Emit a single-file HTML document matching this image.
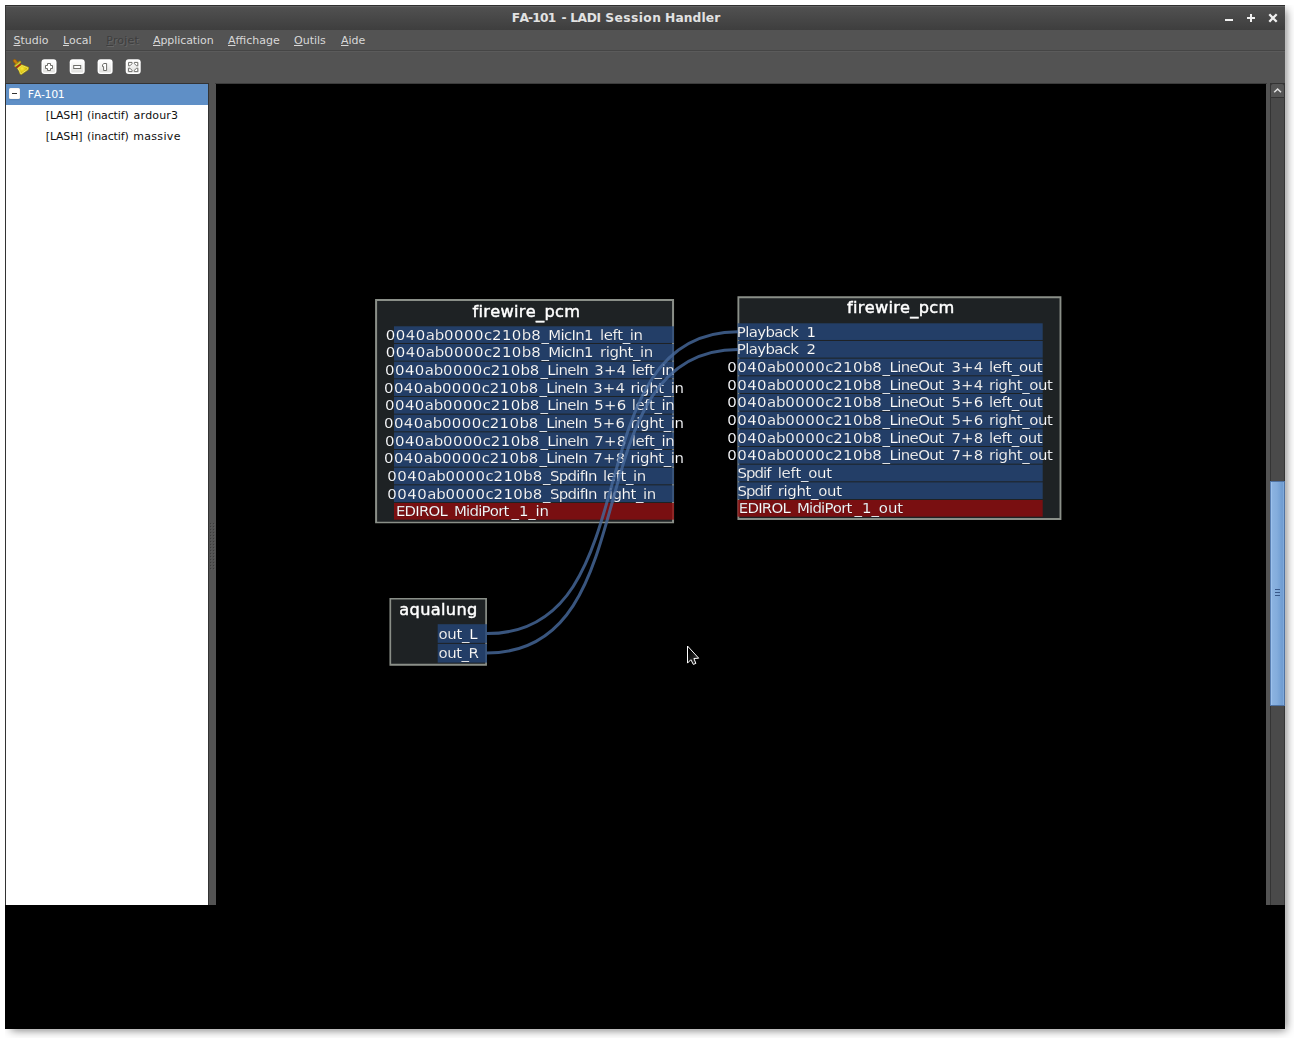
<!DOCTYPE html><html><head><meta charset="utf-8"><title>FA-101 - LADI Session Handler</title><style>
html,body{margin:0;padding:0;}
body{width:1294px;height:1038px;background:#fff;position:relative;overflow:hidden;font-family:"DejaVu Sans","Liberation Sans",sans-serif;font-size:11px;color:#dcdcdc;}
div{position:absolute;box-sizing:border-box;}
#shclip{left:5px;top:5px;width:1289px;height:1033px;overflow:hidden;}
#shadow{left:6px;top:5px;width:1275px;height:1020px;background:rgba(0,0,0,0.55);filter:blur(5px);}
#edgeR{left:1285px;top:6px;width:1px;height:1024px;background:rgba(255,255,255,0.12);}
#edgeB{left:6px;top:1029px;width:1279px;height:1px;background:rgba(255,255,255,0.12);}
#win{left:5px;top:5px;width:1280px;height:1024px;background:#535353;}
#title{left:5px;top:5px;width:1280px;height:25px;background:linear-gradient(#515151,#3e3e3e);border-top:1px solid #2f2f2f;border-left:1px solid #383838;}
#title:before{content:"";position:absolute;left:0;top:0;width:100%;height:1px;background:#626262;}
#ttext{left:-0.5px;top:6px;width:1233px;height:25px;line-height:25px;text-align:center;font-weight:bold;font-size:12.28px;color:#e2e2e2;}
#menubar{left:5px;top:30px;width:1280px;height:21px;background:#535353;border-left:1px solid #3a3a3a;}
.mi{top:31px;height:20px;line-height:20px;font-size:11px;color:#d8d8d8;white-space:nowrap;}
.mi u{text-decoration:underline;text-underline-offset:1px;}
#sep1{left:6px;top:50px;width:1279px;height:1px;background:#454545;}
#sep2{left:6px;top:51px;width:1279px;height:1px;background:#5b5b5b;}
#lborder{left:5px;top:30px;width:1px;height:876px;background:#3a3a3a;}
#tree{left:5px;top:83px;width:204px;height:823px;background:#fff;border:1px solid #333;}
#sel{left:6px;top:84px;width:202px;height:21px;background:#5f8fc6;}
.tr{font-size:11px;color:#101010;height:21px;line-height:21px;white-space:nowrap;}
#canvas{left:216px;top:84px;width:1050px;height:821px;background:#000;}
#cshadow{left:215px;top:83px;width:1052px;height:1px;background:#3c3c3c;}
#bottom{left:5px;top:905px;width:1280px;height:124px;background:#000;}
#sb{left:1270px;top:83px;width:15px;height:822px;background:#4a4a4a;border-left:1px solid #343434;border-right:1px solid #343434;border-top:1px solid #343434;}
#sbup{left:1270px;top:83px;width:15px;height:15px;background:#555;border:1px solid #343434;border-radius:3px 3px 0 0;}
#slider{left:1270px;top:481px;width:15px;height:225px;border:1px solid #4f73a3;border-left-color:#5a80b2;background:linear-gradient(90deg,#9cc1ec 0,#9cc1ec 1px,#8ab2e0 1.5px,#84addc 45%,#6f9cd1 88%,#80aadb 92%,#80aadb);}
</style></head><body>
<div id="shclip"><div id="shadow"></div></div><div id="edgeR"></div><div id="edgeB"></div><div id="win"></div>
<div id="title"></div>
<svg style="position:absolute;left:480px;top:6px" width="300" height="24" viewBox="480 6 300 24"><text y="22" font-size="12.25" font-weight="bold" fill="#e2e2e2" style="font-kerning:none;font-family:DejaVu Sans,Liberation Sans,sans-serif"><tspan x="511.83" letter-spacing="-0.807">FA-101 </tspan><tspan x="561.49" letter-spacing="0.000">- </tspan><tspan x="570.13" letter-spacing="-0.319">LADI </tspan><tspan x="605.27" letter-spacing="0.431">Session </tspan><tspan x="665.03" letter-spacing="0.109">Handler</tspan></text></svg>
<svg style="position:absolute;left:1215px;top:8px" width="70" height="20" viewBox="1215 8 70 20"><g stroke="#f0f0f0" stroke-width="2" fill="none"><path d="M1225 20h8"/><path d="M1247 18h8M1251 14v8"/><path d="M1269.3 14.3l7.4 7.4M1276.7 14.3l-7.4 7.4" stroke-width="2.3"/></g></svg>
<div id="menubar"></div>
<div class="mi" style="left:13.5px;"><u>S</u>tudio</div>
<div class="mi" style="left:63px;"><u>L</u>ocal</div>
<div class="mi" style="left:106.3px;color:#3e3e3e;text-shadow:1px 1px 0 #666;letter-spacing:0.17px;"><u>P</u>rojet</div>
<div class="mi" style="left:153px;letter-spacing:-0.08px;"><u>A</u>pplication</div>
<div class="mi" style="left:228px;"><u>A</u>ffichage</div>
<div class="mi" style="left:294px;"><u>O</u>utils</div>
<div class="mi" style="left:341px;"><u>A</u>ide</div>
<div id="sep1"></div><div id="sep2"></div>
<div id="lborder"></div>

<svg style="position:absolute;left:10px;top:56px" width="140" height="22" viewBox="10 56 140 22">
<defs>
<linearGradient id="wg" x1="0" y1="0" x2="0" y2="1"><stop offset="0" stop-color="#ffffff"/><stop offset="0.45" stop-color="#f2f2f1"/><stop offset="1" stop-color="#dfdfdd"/></linearGradient>
<radialGradient id="yg" cx="22" cy="68.5" r="5.5" gradientUnits="userSpaceOnUse"><stop offset="0" stop-color="#fbe838"/><stop offset="1" stop-color="#cbb200"/></radialGradient>
</defs>
<g>
<path d="M14.6 60.8 L17 63.5" stroke="#94600a" stroke-width="3.6" stroke-linecap="round"/>
<path d="M14.6 60.8 L17 63.5" stroke="#c87e10" stroke-width="2.1" stroke-linecap="round"/>
<path d="M15.4 65.9 L20 62" stroke="#a89a10" stroke-width="2.4" stroke-linecap="round"/>
<path d="M15.7 66 L19.8 62.6" stroke="#d2cc48" stroke-width="1.1" stroke-linecap="round"/>
<path d="M16.7 68.3 L21.5 64.3 C24 65.3 27 66.4 29.1 67.3 L28.5 69.9 L21.2 75.1 L19.7 74.3 C19.3 72 18.3 70 16.7 68.3 Z" fill="#b49e00"/>
<path d="M17.9 68.5 L21.7 65.4 C24 66.3 26.3 67.2 27.9 67.9 L27.5 69.4 L21.1 73.9 L20.6 73.6 C20.1 71.7 19.2 70 17.9 68.5 Z" fill="url(#yg)" stroke="#f4ec78" stroke-width="0.8" stroke-linejoin="round"/>
<path d="M16.2 67.6 L20.9 64" stroke="#c0200e" stroke-width="1.25"/>
</g>
<rect x="41.5" y="59.2" width="15" height="14.8" rx="3" fill="#fff"/><rect x="43" y="60.7" width="12" height="11.8" rx="1.2" fill="url(#wg)"/>
<rect x="69.7" y="59.2" width="15" height="14.8" rx="3" fill="#fff"/><rect x="71.2" y="60.7" width="12" height="11.8" rx="1.2" fill="url(#wg)"/>
<rect x="97.6" y="59.2" width="15" height="14.8" rx="3" fill="#fff"/><rect x="99.1" y="60.7" width="12" height="11.8" rx="1.2" fill="url(#wg)"/>
<rect x="125.7" y="59.2" width="15" height="14.8" rx="3" fill="#fff"/><rect x="127.2" y="60.7" width="12" height="11.8" rx="1.2" fill="url(#wg)"/>

<g fill="#fff" stroke="#6e6e6a" stroke-width="1" stroke-linejoin="miter">
<path d="M47.5 63.5H50.5V65.5H52.5V68.5H50.5V70.5H47.5V68.5H45.5V65.5H47.5Z"/>
<rect x="73.7" y="65.5" width="7" height="3"/>
<path d="M104 63.5H106.6V70.5H103.6V66.6H102.5V64.7Z"/>
<path d="M128.6 62.4H132V63.7L129.9 65.8H128.6Z"/><path d="M137.800 62.4H134.400V63.7L136.500 65.8H137.800Z"/>
<path d="M128.6 71.6H132V70.3L129.9 68.2H128.6Z"/><path d="M137.800 71.6H134.400V70.3L136.500 68.2H137.800Z"/>
</g>
</svg>

<div id="tree"></div><div id="sel"></div>
<svg style="position:absolute;left:8px;top:87px" width="14" height="14" viewBox="8 87 14 14"><rect x="9.3" y="99" width="10.4" height="1.2" fill="#4a78ad" opacity="0.5"/><rect x="9" y="88" width="11" height="11" rx="1.6" fill="#f3ece4"/><rect x="9.6" y="88.6" width="9.8" height="9.8" rx="1" fill="#fff"/><rect x="12" y="93" width="5" height="1" fill="#333"/></svg>
<svg style="position:absolute;left:24px;top:84px" width="184" height="63" viewBox="24 84 184 63"><text y="98" font-size="11" fill="#fff" style="font-kerning:none;font-family:DejaVu Sans,Liberation Sans,sans-serif"><tspan x="27.87" letter-spacing="-0.384">FA-101</tspan></text><text y="119" font-size="11" fill="#101010" style="font-kerning:none;font-family:DejaVu Sans,Liberation Sans,sans-serif"><tspan x="45.80" letter-spacing="-0.140">[LASH] </tspan><tspan x="87.10" letter-spacing="-0.119">(inactif) </tspan><tspan x="133.54" letter-spacing="0.171">ardour3</tspan></text><text y="140" font-size="11" fill="#101010" style="font-kerning:none;font-family:DejaVu Sans,Liberation Sans,sans-serif"><tspan x="45.80" letter-spacing="-0.140">[LASH] </tspan><tspan x="87.10" letter-spacing="-0.119">(inactif) </tspan><tspan x="133.20" letter-spacing="0.331">massive</tspan></text></svg>
<svg style="position:absolute;left:209px;top:522px" width="7" height="49" viewBox="209 522 7 49" shape-rendering="crispEdges"><rect x="210" y="523" width="1" height="1" fill="#3b3b3b"/><rect x="211" y="524" width="1" height="1" fill="#5b5b5b"/><rect x="213" y="523" width="1" height="1" fill="#3b3b3b"/><rect x="214" y="524" width="1" height="1" fill="#5b5b5b"/><rect x="210" y="526" width="1" height="1" fill="#3b3b3b"/><rect x="211" y="527" width="1" height="1" fill="#5b5b5b"/><rect x="213" y="526" width="1" height="1" fill="#3b3b3b"/><rect x="214" y="527" width="1" height="1" fill="#5b5b5b"/><rect x="210" y="529" width="1" height="1" fill="#3b3b3b"/><rect x="211" y="530" width="1" height="1" fill="#5b5b5b"/><rect x="213" y="529" width="1" height="1" fill="#3b3b3b"/><rect x="214" y="530" width="1" height="1" fill="#5b5b5b"/><rect x="210" y="532" width="1" height="1" fill="#3b3b3b"/><rect x="211" y="533" width="1" height="1" fill="#5b5b5b"/><rect x="213" y="532" width="1" height="1" fill="#3b3b3b"/><rect x="214" y="533" width="1" height="1" fill="#5b5b5b"/><rect x="210" y="535" width="1" height="1" fill="#3b3b3b"/><rect x="211" y="536" width="1" height="1" fill="#5b5b5b"/><rect x="213" y="535" width="1" height="1" fill="#3b3b3b"/><rect x="214" y="536" width="1" height="1" fill="#5b5b5b"/><rect x="210" y="538" width="1" height="1" fill="#3b3b3b"/><rect x="211" y="539" width="1" height="1" fill="#5b5b5b"/><rect x="213" y="538" width="1" height="1" fill="#3b3b3b"/><rect x="214" y="539" width="1" height="1" fill="#5b5b5b"/><rect x="210" y="541" width="1" height="1" fill="#3b3b3b"/><rect x="211" y="542" width="1" height="1" fill="#5b5b5b"/><rect x="213" y="541" width="1" height="1" fill="#3b3b3b"/><rect x="214" y="542" width="1" height="1" fill="#5b5b5b"/><rect x="210" y="544" width="1" height="1" fill="#3b3b3b"/><rect x="211" y="545" width="1" height="1" fill="#5b5b5b"/><rect x="213" y="544" width="1" height="1" fill="#3b3b3b"/><rect x="214" y="545" width="1" height="1" fill="#5b5b5b"/><rect x="210" y="547" width="1" height="1" fill="#3b3b3b"/><rect x="211" y="548" width="1" height="1" fill="#5b5b5b"/><rect x="213" y="547" width="1" height="1" fill="#3b3b3b"/><rect x="214" y="548" width="1" height="1" fill="#5b5b5b"/><rect x="210" y="550" width="1" height="1" fill="#3b3b3b"/><rect x="211" y="551" width="1" height="1" fill="#5b5b5b"/><rect x="213" y="550" width="1" height="1" fill="#3b3b3b"/><rect x="214" y="551" width="1" height="1" fill="#5b5b5b"/><rect x="210" y="553" width="1" height="1" fill="#3b3b3b"/><rect x="211" y="554" width="1" height="1" fill="#5b5b5b"/><rect x="213" y="553" width="1" height="1" fill="#3b3b3b"/><rect x="214" y="554" width="1" height="1" fill="#5b5b5b"/><rect x="210" y="556" width="1" height="1" fill="#3b3b3b"/><rect x="211" y="557" width="1" height="1" fill="#5b5b5b"/><rect x="213" y="556" width="1" height="1" fill="#3b3b3b"/><rect x="214" y="557" width="1" height="1" fill="#5b5b5b"/><rect x="210" y="559" width="1" height="1" fill="#3b3b3b"/><rect x="211" y="560" width="1" height="1" fill="#5b5b5b"/><rect x="213" y="559" width="1" height="1" fill="#3b3b3b"/><rect x="214" y="560" width="1" height="1" fill="#5b5b5b"/><rect x="210" y="562" width="1" height="1" fill="#3b3b3b"/><rect x="211" y="563" width="1" height="1" fill="#5b5b5b"/><rect x="213" y="562" width="1" height="1" fill="#3b3b3b"/><rect x="214" y="563" width="1" height="1" fill="#5b5b5b"/><rect x="210" y="565" width="1" height="1" fill="#3b3b3b"/><rect x="211" y="566" width="1" height="1" fill="#5b5b5b"/><rect x="213" y="565" width="1" height="1" fill="#3b3b3b"/><rect x="214" y="566" width="1" height="1" fill="#5b5b5b"/><rect x="210" y="568" width="1" height="1" fill="#3b3b3b"/><rect x="211" y="569" width="1" height="1" fill="#5b5b5b"/><rect x="213" y="568" width="1" height="1" fill="#3b3b3b"/><rect x="214" y="569" width="1" height="1" fill="#5b5b5b"/></svg>
<div id="cshadow"></div>
<div id="canvas"></div>
<div id="bottom"></div>
<div id="sb"></div><div id="sbup"></div><div id="slider"></div>
<svg style="position:absolute;left:1270px;top:83px" width="15" height="15" viewBox="0 0 15 15"><path d="M4.2 9.3 L7.6 6 L11 9.3" fill="none" stroke="#e4e4e4" stroke-width="1.5"/></svg>
<svg style="position:absolute;left:1273px;top:588px" width="9" height="9" viewBox="0 0 9 9"><path d="M2 1.5h5M2 4.5h5M2 7.500h5" stroke="#39598a" stroke-width="1"/></svg>
<svg style="position:absolute;left:216px;top:84px;opacity:0.999" width="1050" height="821" viewBox="216 84 1050 821" font-family='DejaVu Sans,Liberation Sans,sans-serif'>
<rect x="375.6" y="299.6" width="297.95" height="223.05" fill="#1e2224"/>
<path d="M375.1 299.1H674.05V523.15H375.1ZM377.1 301.1V521.7H672.05V301.1Z" fill="#8a8f88" fill-rule="evenodd"/>
<rect x="394" y="326.3" width="280" height="16.67" fill="#244678" fill-opacity="0.8"/>
<rect x="394" y="343.97" width="280" height="16.67" fill="#244678" fill-opacity="0.8"/>
<rect x="394" y="361.64" width="280" height="16.67" fill="#244678" fill-opacity="0.8"/>
<rect x="394" y="379.31" width="280" height="16.67" fill="#244678" fill-opacity="0.8"/>
<rect x="394" y="396.98" width="280" height="16.67" fill="#244678" fill-opacity="0.8"/>
<rect x="394" y="414.65" width="280" height="16.67" fill="#244678" fill-opacity="0.8"/>
<rect x="394" y="432.32" width="280" height="16.67" fill="#244678" fill-opacity="0.8"/>
<rect x="394" y="449.99" width="280" height="16.67" fill="#244678" fill-opacity="0.8"/>
<rect x="394" y="467.66" width="280" height="16.67" fill="#244678" fill-opacity="0.8"/>
<rect x="394" y="485.33" width="280" height="16.67" fill="#244678" fill-opacity="0.8"/>
<rect x="394" y="503" width="280" height="16.67" fill="#900b0d" fill-opacity="0.8"/>
<text y="317.00" font-size="16.2" fill="#fff" style="font-kerning:none" stroke="#fff" stroke-width="0.45"><tspan x="472.50" letter-spacing="0.302">firewire<tspan dy="1">_</tspan><tspan dy="-1">pcm</tspan></tspan></text>
<text y="340.00" font-size="14.93" fill="#fff" style="font-kerning:none" stroke="#0a1626" stroke-opacity="0.5" stroke-width="0.25"><tspan x="385.87" letter-spacing="0.482">0040</tspan><tspan letter-spacing="-0.200">ab</tspan><tspan letter-spacing="0.482">0000</tspan><tspan letter-spacing="-0.200">c</tspan><tspan letter-spacing="0.482">210</tspan><tspan letter-spacing="-0.200">b</tspan><tspan letter-spacing="0.482">8</tspan><tspan x="541.50" letter-spacing="-0.673"><tspan dy="1">_</tspan><tspan dy="-1">MicIn1 </tspan></tspan><tspan x="599.94" letter-spacing="-0.424">left<tspan dy="1">_</tspan><tspan dy="-1">in</tspan></tspan></text>
<text y="357.00" font-size="14.93" fill="#fff" style="font-kerning:none" stroke="#0a1626" stroke-opacity="0.5" stroke-width="0.25"><tspan x="385.87" letter-spacing="0.482">0040</tspan><tspan letter-spacing="-0.200">ab</tspan><tspan letter-spacing="0.482">0000</tspan><tspan letter-spacing="-0.200">c</tspan><tspan letter-spacing="0.482">210</tspan><tspan letter-spacing="-0.200">b</tspan><tspan letter-spacing="0.482">8</tspan><tspan x="541.50" letter-spacing="-0.673"><tspan dy="1">_</tspan><tspan dy="-1">MicIn1 </tspan></tspan><tspan x="599.99" letter-spacing="-0.404">right<tspan dy="1">_</tspan><tspan dy="-1">in</tspan></tspan></text>
<text y="375.00" font-size="14.93" fill="#fff" style="font-kerning:none" stroke="#0a1626" stroke-opacity="0.5" stroke-width="0.25"><tspan x="385.07" letter-spacing="0.437">0040</tspan><tspan letter-spacing="-0.200">ab</tspan><tspan letter-spacing="0.437">0000</tspan><tspan letter-spacing="-0.200">c</tspan><tspan letter-spacing="0.437">210</tspan><tspan letter-spacing="-0.200">b</tspan><tspan letter-spacing="0.437">8</tspan><tspan x="540.60" letter-spacing="-0.704"><tspan dy="1">_</tspan><tspan dy="-1">LineIn </tspan></tspan><tspan x="594.31" letter-spacing="0.134">3+4 </tspan><tspan x="631.74" letter-spacing="-0.424">left<tspan dy="1">_</tspan><tspan dy="-1">in</tspan></tspan></text>
<text y="393.00" font-size="14.93" fill="#fff" style="font-kerning:none" stroke="#0a1626" stroke-opacity="0.5" stroke-width="0.25"><tspan x="383.97" letter-spacing="0.437">0040</tspan><tspan letter-spacing="-0.200">ab</tspan><tspan letter-spacing="0.437">0000</tspan><tspan letter-spacing="-0.200">c</tspan><tspan letter-spacing="0.437">210</tspan><tspan letter-spacing="-0.200">b</tspan><tspan letter-spacing="0.437">8</tspan><tspan x="539.50" letter-spacing="-0.704"><tspan dy="1">_</tspan><tspan dy="-1">LineIn </tspan></tspan><tspan x="593.21" letter-spacing="0.134">3+4 </tspan><tspan x="630.59" letter-spacing="-0.390">right<tspan dy="1">_</tspan><tspan dy="-1">in</tspan></tspan></text>
<text y="410.00" font-size="14.93" fill="#fff" style="font-kerning:none" stroke="#0a1626" stroke-opacity="0.5" stroke-width="0.25"><tspan x="385.07" letter-spacing="0.437">0040</tspan><tspan letter-spacing="-0.200">ab</tspan><tspan letter-spacing="0.437">0000</tspan><tspan letter-spacing="-0.200">c</tspan><tspan letter-spacing="0.437">210</tspan><tspan letter-spacing="-0.200">b</tspan><tspan letter-spacing="0.437">8</tspan><tspan x="540.60" letter-spacing="-0.704"><tspan dy="1">_</tspan><tspan dy="-1">LineIn </tspan></tspan><tspan x="594.30" letter-spacing="0.192">5+6 </tspan><tspan x="631.74" letter-spacing="-0.424">left<tspan dy="1">_</tspan><tspan dy="-1">in</tspan></tspan></text>
<text y="428.00" font-size="14.93" fill="#fff" style="font-kerning:none" stroke="#0a1626" stroke-opacity="0.5" stroke-width="0.25"><tspan x="383.97" letter-spacing="0.437">0040</tspan><tspan letter-spacing="-0.200">ab</tspan><tspan letter-spacing="0.437">0000</tspan><tspan letter-spacing="-0.200">c</tspan><tspan letter-spacing="0.437">210</tspan><tspan letter-spacing="-0.200">b</tspan><tspan letter-spacing="0.437">8</tspan><tspan x="539.50" letter-spacing="-0.704"><tspan dy="1">_</tspan><tspan dy="-1">LineIn </tspan></tspan><tspan x="593.20" letter-spacing="0.192">5+6 </tspan><tspan x="630.59" letter-spacing="-0.390">right<tspan dy="1">_</tspan><tspan dy="-1">in</tspan></tspan></text>
<text y="446.00" font-size="14.93" fill="#fff" style="font-kerning:none" stroke="#0a1626" stroke-opacity="0.5" stroke-width="0.25"><tspan x="385.07" letter-spacing="0.437">0040</tspan><tspan letter-spacing="-0.200">ab</tspan><tspan letter-spacing="0.437">0000</tspan><tspan letter-spacing="-0.200">c</tspan><tspan letter-spacing="0.437">210</tspan><tspan letter-spacing="-0.200">b</tspan><tspan letter-spacing="0.437">8</tspan><tspan x="540.60" letter-spacing="-0.704"><tspan dy="1">_</tspan><tspan dy="-1">LineIn </tspan></tspan><tspan x="594.23" letter-spacing="0.269">7+8 </tspan><tspan x="631.74" letter-spacing="-0.424">left<tspan dy="1">_</tspan><tspan dy="-1">in</tspan></tspan></text>
<text y="463.00" font-size="14.93" fill="#fff" style="font-kerning:none" stroke="#0a1626" stroke-opacity="0.5" stroke-width="0.25"><tspan x="383.97" letter-spacing="0.437">0040</tspan><tspan letter-spacing="-0.200">ab</tspan><tspan letter-spacing="0.437">0000</tspan><tspan letter-spacing="-0.200">c</tspan><tspan letter-spacing="0.437">210</tspan><tspan letter-spacing="-0.200">b</tspan><tspan letter-spacing="0.437">8</tspan><tspan x="539.50" letter-spacing="-0.704"><tspan dy="1">_</tspan><tspan dy="-1">LineIn </tspan></tspan><tspan x="593.13" letter-spacing="0.269">7+8 </tspan><tspan x="630.59" letter-spacing="-0.390">right<tspan dy="1">_</tspan><tspan dy="-1">in</tspan></tspan></text>
<text y="481.00" font-size="14.93" fill="#fff" style="font-kerning:none" stroke="#0a1626" stroke-opacity="0.5" stroke-width="0.25"><tspan x="387.37" letter-spacing="0.482">0040</tspan><tspan letter-spacing="-0.200">ab</tspan><tspan letter-spacing="0.482">0000</tspan><tspan letter-spacing="-0.200">c</tspan><tspan letter-spacing="0.482">210</tspan><tspan letter-spacing="-0.200">b</tspan><tspan letter-spacing="0.482">8</tspan><tspan x="543.10" letter-spacing="-0.678"><tspan dy="1">_</tspan><tspan dy="-1">SpdifIn </tspan></tspan><tspan x="602.94" letter-spacing="-0.357">left<tspan dy="1">_</tspan><tspan dy="-1">in</tspan></tspan></text>
<text y="499.00" font-size="14.93" fill="#fff" style="font-kerning:none" stroke="#0a1626" stroke-opacity="0.5" stroke-width="0.25"><tspan x="387.37" letter-spacing="0.482">0040</tspan><tspan letter-spacing="-0.200">ab</tspan><tspan letter-spacing="0.482">0000</tspan><tspan letter-spacing="-0.200">c</tspan><tspan letter-spacing="0.482">210</tspan><tspan letter-spacing="-0.200">b</tspan><tspan letter-spacing="0.482">8</tspan><tspan x="543.10" letter-spacing="-0.678"><tspan dy="1">_</tspan><tspan dy="-1">SpdifIn </tspan></tspan><tspan x="602.99" letter-spacing="-0.419">right<tspan dy="1">_</tspan><tspan dy="-1">in</tspan></tspan></text>
<text y="516.00" font-size="14.93" fill="#fff" style="font-kerning:none" stroke="#0a1626" stroke-opacity="0.5" stroke-width="0.25"><tspan x="395.88" letter-spacing="-0.746">EDIROL </tspan><tspan x="453.98" letter-spacing="-0.752">MidiPort</tspan><tspan x="511.60" letter-spacing="-0.154"><tspan dy="1">_</tspan><tspan dy="-1">1</tspan><tspan dy="1">_</tspan><tspan dy="-1">in</tspan></tspan></text>
<rect x="737.95" y="296.8" width="322.95" height="222.6" fill="#1e2224"/>
<path d="M737.45 296.3H1061.4V519.9H737.45ZM739.3 298.15V518.05H1059.55V298.15Z" fill="#8a8f88" fill-rule="evenodd"/>
<rect x="737.5" y="323.3" width="305.2" height="16.67" fill="#244678" fill-opacity="0.8"/>
<rect x="737.5" y="340.97" width="305.2" height="16.67" fill="#244678" fill-opacity="0.8"/>
<rect x="737.5" y="358.64" width="305.2" height="16.67" fill="#244678" fill-opacity="0.8"/>
<rect x="737.5" y="376.31" width="305.2" height="16.67" fill="#244678" fill-opacity="0.8"/>
<rect x="737.5" y="393.98" width="305.2" height="16.67" fill="#244678" fill-opacity="0.8"/>
<rect x="737.5" y="411.65" width="305.2" height="16.67" fill="#244678" fill-opacity="0.8"/>
<rect x="737.5" y="429.32" width="305.2" height="16.67" fill="#244678" fill-opacity="0.8"/>
<rect x="737.5" y="446.99" width="305.2" height="16.67" fill="#244678" fill-opacity="0.8"/>
<rect x="737.5" y="464.66" width="305.2" height="16.67" fill="#244678" fill-opacity="0.8"/>
<rect x="737.5" y="482.33" width="305.2" height="16.67" fill="#244678" fill-opacity="0.8"/>
<rect x="737.5" y="500" width="305.2" height="16.67" fill="#900b0d" fill-opacity="0.8"/>
<text y="313.00" font-size="16.2" fill="#fff" style="font-kerning:none" stroke="#fff" stroke-width="0.45"><tspan x="847.00" letter-spacing="0.274">firewire<tspan dy="1">_</tspan><tspan dy="-1">pcm</tspan></tspan></text>
<text y="337.00" font-size="14.93" fill="#fff" style="font-kerning:none" stroke="#0a1626" stroke-opacity="0.5" stroke-width="0.25"><tspan x="736.78" letter-spacing="-0.622">Playback </tspan><tspan x="806.61" letter-spacing="0.000">1</tspan></text>
<text y="354.00" font-size="14.93" fill="#fff" style="font-kerning:none" stroke="#0a1626" stroke-opacity="0.5" stroke-width="0.25"><tspan x="736.78" letter-spacing="-0.622">Playback </tspan><tspan x="806.61" letter-spacing="0.000">2</tspan></text>
<text y="372.00" font-size="14.93" fill="#fff" style="font-kerning:none" stroke="#0a1626" stroke-opacity="0.5" stroke-width="0.25"><tspan x="727.22" letter-spacing="0.464">0040</tspan><tspan letter-spacing="-0.200">ab</tspan><tspan letter-spacing="0.464">0000</tspan><tspan letter-spacing="-0.200">c</tspan><tspan letter-spacing="0.464">210</tspan><tspan letter-spacing="-0.200">b</tspan><tspan letter-spacing="0.464">8</tspan><tspan x="882.55" letter-spacing="-0.584"><tspan dy="1">_</tspan><tspan dy="-1">LineOut </tspan></tspan><tspan x="951.46" letter-spacing="0.109">3+4 </tspan><tspan x="989.04" letter-spacing="-0.406">left<tspan dy="1">_</tspan><tspan dy="-1">out</tspan></tspan></text>
<text y="390.00" font-size="14.93" fill="#fff" style="font-kerning:none" stroke="#0a1626" stroke-opacity="0.5" stroke-width="0.25"><tspan x="727.22" letter-spacing="0.464">0040</tspan><tspan letter-spacing="-0.200">ab</tspan><tspan letter-spacing="0.464">0000</tspan><tspan letter-spacing="-0.200">c</tspan><tspan letter-spacing="0.464">210</tspan><tspan letter-spacing="-0.200">b</tspan><tspan letter-spacing="0.464">8</tspan><tspan x="882.55" letter-spacing="-0.584"><tspan dy="1">_</tspan><tspan dy="-1">LineOut </tspan></tspan><tspan x="951.46" letter-spacing="0.109">3+4 </tspan><tspan x="989.09" letter-spacing="-0.385">right<tspan dy="1">_</tspan><tspan dy="-1">out</tspan></tspan></text>
<text y="407.00" font-size="14.93" fill="#fff" style="font-kerning:none" stroke="#0a1626" stroke-opacity="0.5" stroke-width="0.25"><tspan x="727.22" letter-spacing="0.464">0040</tspan><tspan letter-spacing="-0.200">ab</tspan><tspan letter-spacing="0.464">0000</tspan><tspan letter-spacing="-0.200">c</tspan><tspan letter-spacing="0.464">210</tspan><tspan letter-spacing="-0.200">b</tspan><tspan letter-spacing="0.464">8</tspan><tspan x="882.55" letter-spacing="-0.584"><tspan dy="1">_</tspan><tspan dy="-1">LineOut </tspan></tspan><tspan x="951.45" letter-spacing="0.167">5+6 </tspan><tspan x="989.04" letter-spacing="-0.406">left<tspan dy="1">_</tspan><tspan dy="-1">out</tspan></tspan></text>
<text y="425.00" font-size="14.93" fill="#fff" style="font-kerning:none" stroke="#0a1626" stroke-opacity="0.5" stroke-width="0.25"><tspan x="727.22" letter-spacing="0.464">0040</tspan><tspan letter-spacing="-0.200">ab</tspan><tspan letter-spacing="0.464">0000</tspan><tspan letter-spacing="-0.200">c</tspan><tspan letter-spacing="0.464">210</tspan><tspan letter-spacing="-0.200">b</tspan><tspan letter-spacing="0.464">8</tspan><tspan x="882.55" letter-spacing="-0.584"><tspan dy="1">_</tspan><tspan dy="-1">LineOut </tspan></tspan><tspan x="951.45" letter-spacing="0.167">5+6 </tspan><tspan x="989.09" letter-spacing="-0.385">right<tspan dy="1">_</tspan><tspan dy="-1">out</tspan></tspan></text>
<text y="443.00" font-size="14.93" fill="#fff" style="font-kerning:none" stroke="#0a1626" stroke-opacity="0.5" stroke-width="0.25"><tspan x="727.22" letter-spacing="0.464">0040</tspan><tspan letter-spacing="-0.200">ab</tspan><tspan letter-spacing="0.464">0000</tspan><tspan letter-spacing="-0.200">c</tspan><tspan letter-spacing="0.464">210</tspan><tspan letter-spacing="-0.200">b</tspan><tspan letter-spacing="0.464">8</tspan><tspan x="882.55" letter-spacing="-0.584"><tspan dy="1">_</tspan><tspan dy="-1">LineOut </tspan></tspan><tspan x="951.38" letter-spacing="0.244">7+8 </tspan><tspan x="989.04" letter-spacing="-0.406">left<tspan dy="1">_</tspan><tspan dy="-1">out</tspan></tspan></text>
<text y="460.00" font-size="14.93" fill="#fff" style="font-kerning:none" stroke="#0a1626" stroke-opacity="0.5" stroke-width="0.25"><tspan x="727.22" letter-spacing="0.464">0040</tspan><tspan letter-spacing="-0.200">ab</tspan><tspan letter-spacing="0.464">0000</tspan><tspan letter-spacing="-0.200">c</tspan><tspan letter-spacing="0.464">210</tspan><tspan letter-spacing="-0.200">b</tspan><tspan letter-spacing="0.464">8</tspan><tspan x="882.55" letter-spacing="-0.584"><tspan dy="1">_</tspan><tspan dy="-1">LineOut </tspan></tspan><tspan x="951.38" letter-spacing="0.244">7+8 </tspan><tspan x="989.09" letter-spacing="-0.385">right<tspan dy="1">_</tspan><tspan dy="-1">out</tspan></tspan></text>
<text y="478.00" font-size="14.93" fill="#fff" style="font-kerning:none" stroke="#0a1626" stroke-opacity="0.5" stroke-width="0.25"><tspan x="737.47" letter-spacing="-0.959">Spdif </tspan><tspan x="777.74" letter-spacing="-0.299">left<tspan dy="1">_</tspan><tspan dy="-1">out</tspan></tspan></text>
<text y="496.00" font-size="14.93" fill="#fff" style="font-kerning:none" stroke="#0a1626" stroke-opacity="0.5" stroke-width="0.25"><tspan x="737.47" letter-spacing="-0.959">Spdif </tspan><tspan x="777.79" letter-spacing="-0.348">right<tspan dy="1">_</tspan><tspan dy="-1">out</tspan></tspan></text>
<text y="513.00" font-size="14.93" fill="#fff" style="font-kerning:none" stroke="#0a1626" stroke-opacity="0.5" stroke-width="0.25"><tspan x="738.78" letter-spacing="-0.746">EDIROL </tspan><tspan x="796.88" letter-spacing="-0.752">MidiPort</tspan><tspan x="854.50" letter-spacing="-0.034"><tspan dy="1">_</tspan><tspan dy="-1">1</tspan><tspan dy="1">_</tspan><tspan dy="-1">out</tspan></tspan></text>
<rect x="389.95" y="598.4" width="96.5" height="66.9" fill="#1e2224"/>
<path d="M389.45 597.9H486.95V665.8H389.45ZM391.15 599.6V663.8H485.25V599.6Z" fill="#8a8f88" fill-rule="evenodd"/>
<rect x="437.7" y="624.2" width="49.3" height="18.65" fill="#244678" fill-opacity="0.8"/>
<rect x="437.7" y="643.9" width="49.3" height="18.7" fill="#244678" fill-opacity="0.8"/>
<text y="615.00" font-size="16.2" fill="#fff" style="font-kerning:none" stroke="#fff" stroke-width="0.45"><tspan x="399.30" letter-spacing="0.339">aqualung</tspan></text>
<text y="639.00" font-size="14.93" fill="#fff" style="font-kerning:none" stroke="#0a1626" stroke-opacity="0.5" stroke-width="0.25"><tspan x="438.53" letter-spacing="-0.307">out<tspan dy="1">_</tspan><tspan dy="-1">L</tspan></tspan></text>
<text y="658.00" font-size="14.93" fill="#fff" style="font-kerning:none" stroke="#0a1626" stroke-opacity="0.5" stroke-width="0.25"><tspan x="438.53" letter-spacing="-0.484">out<tspan dy="1">_</tspan><tspan dy="-1">R</tspan></tspan></text>
<path d="M487 633.6 C654 633.6 571 331.8 738 331.8" fill="none" stroke="#46689a" stroke-opacity="0.82" stroke-width="3"/>
<path d="M487 653 C654 653 571 349.5 738 349.5" fill="none" stroke="#46689a" stroke-opacity="0.82" stroke-width="3"/>
<defs><linearGradient id="cg" x1="0" y1="0" x2="1" y2="1"><stop offset="0.2" stop-color="#000"/><stop offset="0.8" stop-color="#333"/></linearGradient></defs><path d="M687.5 646 L687.5 663.1 L690.9 659.7 L693.3 664.4 L695.9 663.4 L693.9 658.5 L698.7 658.2 Z" fill="url(#cg)" stroke="#fff" stroke-width="1" stroke-linejoin="miter"/>
</svg>
</body></html>
